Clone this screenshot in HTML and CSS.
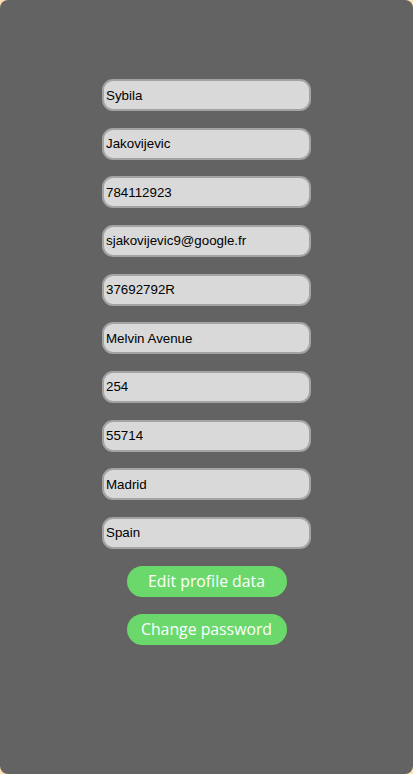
FILE: index.html
```html
<!DOCTYPE html>
<html>
<head>
<meta charset="utf-8">
<link rel="stylesheet" href="styles.css">
</head>
<body>
<div class="panel">
  <form class="form">
    <input class="field" type="text" value="Sybila">
    <input class="field" type="text" value="Jakovijevic">
    <input class="field" type="text" value="784112923">
    <input class="field" type="text" value="sjakovijevic9@google.fr">
    <input class="field" type="text" value="37692792R">
    <input class="field" type="text" value="Melvin Avenue">
    <input class="field" type="text" value="254">
    <input class="field" type="text" value="55714">
    <input class="field" type="text" value="Madrid">
    <input class="field" type="text" value="Spain">
    <div class="actions">
      <button class="btn" type="button">Edit profile data</button>
      <button class="btn" type="button">Change password</button>
    </div>
  </form>
</div>
</body>
</html>
```
FILE: styles.css
```css
html, body {
  margin: 0;
  padding: 0;
  background: #ffdfb3;
}
.panel {
  height: 774px;
  box-sizing: border-box;
  background: #636363;
  border-radius: 8px;
  padding-top: 79px;
}
.form {
  display: flex;
  flex-direction: column;
  align-items: center;
  gap: 16.67px;
  margin: 0;
}
.field {
  box-sizing: border-box;
  width: 209px;
  height: 32px;
  margin: 0;
  padding: 0 2px;
  border: 2px solid #a3a3a3;
  border-radius: 11px;
  background: #d9d9d9;
  font-family: "Liberation Sans", Arial, sans-serif;
  font-size: 13.33px;
  color: #000;
  outline: none;
}
.actions {
  display: flex;
  flex-direction: column;
  align-items: center;
  gap: 17px;
  margin-top: 0;
}
.btn {
  box-sizing: border-box;
  width: 160px;
  height: 31px;
  border: none;
  border-radius: 16px;
  background: #6ad86a;
  color: #fff;
  font-family: "Open Sans", "DejaVu Sans", sans-serif;
  font-size: 15.8px;
  padding: 0;
}
```
